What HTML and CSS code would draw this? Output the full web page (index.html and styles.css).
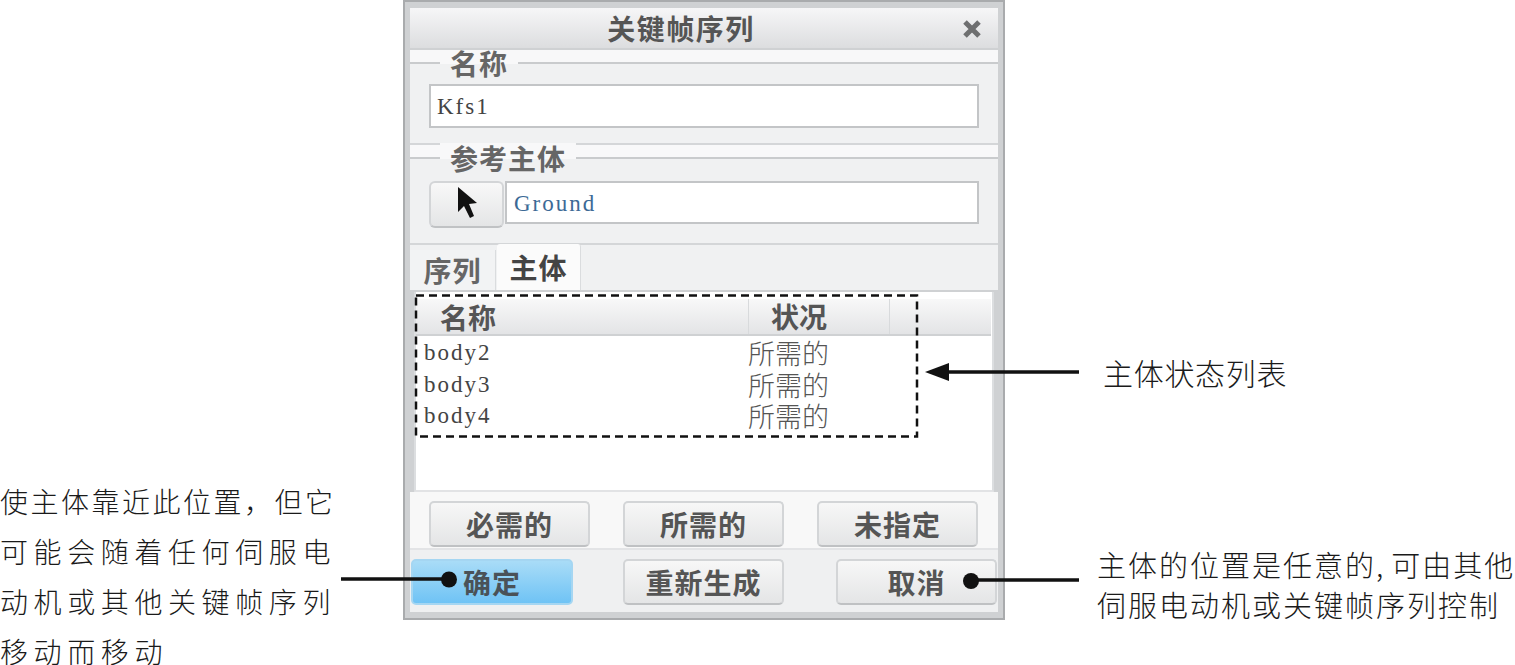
FILE: index.html
```html
<!DOCTYPE html>
<html lang="zh-CN">
<head>
    <meta charset="UTF-8">
    <title>关键帧序列</title>
    <link rel="stylesheet" href="styles.css">
</head>
<body>
    <div class="stage">
        <div class="note note-left">
            <div class="tight">使主体靠近此位置&#xFF0C;但它</div>
            <div>可能会随着任何伺服电</div>
            <div>动机或其他关键帧序列</div>
            <div>移动而移动</div>
        </div>

        <div class="dialog">
            <div class="title-bar">
                <span class="title">关键帧序列</span>
                <svg class="close" width="20" height="20" viewBox="0 0 20 20"><path d="M3 3 L17 17 M17 3 L3 17" stroke="#6e6f70" stroke-width="5"/></svg>
            </div>

            <div class="group group-name">
                <div class="legend"><span>名称</span></div>
                <div class="group-body">
                    <div class="field mono">Kfs1</div>
                </div>
            </div>

            <div class="group group-ref">
                <div class="legend"><span>参考主体</span></div>
                <div class="group-body">
                    <button class="pick">
                        <svg width="20" height="32" viewBox="0 0 20 32"><path d="M1 0 L1 25 L7 19 L13 31 L17 29 L12 17 L20 16 Z" fill="#111"/></svg>
                    </button>
                    <div class="field mono ground">Ground</div>
                </div>
            </div>

            <div class="tabs">
                <div class="tab">序列</div>
                <div class="tab tab-active">主体</div>
            </div>

            <div class="list">
                <div class="list-head">
                    <div class="col-name">名称</div>
                    <div class="col-state">状况</div>
                    <div class="col-rest"></div>
                </div>
                <div class="list-row"><span class="col-name mono">body2</span><span class="col-state">所需的</span></div>
                <div class="list-row"><span class="col-name mono">body3</span><span class="col-state">所需的</span></div>
                <div class="list-row"><span class="col-name mono">body4</span><span class="col-state">所需的</span></div>
            </div>

            <div class="state-buttons">
                <button class="btn">必需的</button>
                <button class="btn">所需的</button>
                <button class="btn">未指定</button>
            </div>

            <div class="footer">
                <button class="btn btn-ok">确定</button>
                <button class="btn">重新生成</button>
                <button class="btn btn-cancel">取消</button>
            </div>
        </div>

        <div class="notes-right">
            <div class="note note-list">主体状态列表</div>
            <div class="note note-free">主体的位置是任意的<span class="comma">,</span>可由其他<br>伺服电动机或关键帧序列控制</div>
        </div>

        <!-- callout lines and the dashed box sit over the dialog -->
        <svg class="callouts" width="1515" height="665" viewBox="0 0 1515 665">
            <rect x="416" y="295.500" width="501" height="141" fill="none" stroke="#111" stroke-width="2.500" stroke-dasharray="8 5"/>
            <path d="M1079 372 H945" stroke="#111" stroke-width="3.500"/>
            <path d="M925 372 L949 363 V381 Z" fill="#111"/>
            <path d="M341 579 H449" stroke="#111" stroke-width="3.500"/>
            <circle cx="449" cy="579.500" r="8" fill="#111"/>
            <path d="M971 580 H1079" stroke="#111" stroke-width="3.500"/>
            <circle cx="971" cy="581" r="8" fill="#111"/>
        </svg>
    </div>
</body>
</html>
```

FILE: styles.css
```css
* {
    box-sizing: border-box;
}

body {
    margin: 0;
    background: #fff;
    overflow: hidden;
    font-family: "Noto Sans CJK SC", "Liberation Sans", sans-serif;
}

.stage {
    position: relative;
    display: grid;
    grid-template-columns: 403px 602px 1fr;
    width: 1515px;
    height: 665px;
    overflow: hidden;
}

.callouts {
    position: absolute;
    top: 0;
    left: 0;
    pointer-events: none;
}

.note {
    font-weight: 300;
    color: #1a1a1a;
    white-space: nowrap;
}

.note-left {
    display: flex;
    flex-direction: column;
    gap: 22px;
    margin-top: 487px;
    font-size: 28px;
    line-height: 28px;
    letter-spacing: 5.600px;
}

.note-left .tight {
    letter-spacing: 2.500px;
}

.notes-right {
    display: flex;
    flex-direction: column;
}

.note-list {
    margin: 352px 0 0 98px;
    font-size: 30px;
    line-height: 40px;
    letter-spacing: 0.700px;
}

.note-free {
    margin: 152px 0 0 92px;
    font-size: 29px;
    line-height: 40px;
    letter-spacing: 2px;
}

.comma {
    letter-spacing: 8px;
}

/* dialog */
.dialog {
    display: flex;
    flex-direction: column;
    height: 620px;
    padding: 6px 5px 6px 5px;
    background: #cfd1d3;
    border: 2px solid #a9abad;
    color: #555;
    font-size: 28px;
    font-weight: 700;
}

.mono {
    font-family: "Liberation Serif", serif;
    font-weight: 400;
    font-size: 23px;
    letter-spacing: 2px;
    color: #444;
}

.title-bar {
    display: flex;
    align-items: center;
    justify-content: center;
    position: relative;
    height: 42px;
    padding-right: 46px;
    flex: none;
    background: linear-gradient(#f6f6f7, #dcdddf);
    border-bottom: 2px solid #cfd1d3;
}

.title {
    font-size: 28px;
    letter-spacing: 1.500px;
}

.close {
    position: absolute;
    right: 16px;
    top: 11px;
}

/* groups */
.group {
    flex: none;
    background: #f0f1f2;
    border-bottom: 2px solid #d4d6d8;
}

.group-name {
    height: 95px;
}

.group-ref {
    height: 100px;
}

.legend {
    display: flex;
    align-items: center;
    height: 30px;
    padding-left: 30px;
    background: linear-gradient(#f8f8f9 12px, #c9cbcd 12px, #c9cbcd 14px, #f0f1f2 14px);
    font-size: 28px;
    letter-spacing: 1px;
    color: #666;
}

.legend span {
    height: 30px;
    margin-top: -4px;
    padding: 0 10px;
    line-height: 30px;
    background: linear-gradient(#f8f8f9 16px, #f0f1f2 16px);
}

.group-body {
    display: flex;
    padding: 4px 19px 0;
}

.group-ref .group-body {
    padding-top: 6px;
}

.field {
    flex: 1;
    height: 44px;
    padding-left: 6px;
    background: #fff;
    border: 2px solid #c3c5c7;
    line-height: 42px;
}

.ground {
    margin-left: 1px;
    height: 43px;
    color: #3c6a96;
    padding-left: 7px;
}

.pick {
    width: 75px;
    height: 47px;
    padding: 0;
    background: linear-gradient(#f8f8f8, #e4e5e6);
    border: 2px solid #d3d5d7;
    border-bottom-color: #c0c2c4;
    border-radius: 6px;
}

/* tabs */
.tabs {
    display: flex;
    align-items: flex-end;
    flex: none;
    height: 47px;
    background: #f0f1f2;
    border-bottom: 2px solid #cfd1d3;
}

.tab {
    display: flex;
    align-items: center;
    justify-content: center;
    width: 86px;
    height: 40px;
    background: #f2f3f4;
    border-right: 1px solid #dadcde;
    font-size: 28px;
    letter-spacing: 1px;
    color: #666;
}

.tab-active {
    width: 84px;
    height: 46px;
    margin-left: 1px;
    padding-bottom: 1px;
    background: #fbfbfb;
    color: #444;
    border-radius: 3px 3px 0 0;
}

/* list */
.list {
    flex: none;
    height: 200px;
    margin: 0 4px;
    padding-top: 7px;
    background: #fff;
    border-left: 2px solid #dcdee0;
    border-right: 2px solid #dcdee0;
    border-bottom: 2px solid #e2e3e5;
    font-size: 28px;
}

.list-head {
    display: flex;
    align-items: center;
    height: 37px;
    margin-right: 1px;
    background: linear-gradient(#f8f8f8, #e3e4e6);
    border-bottom: 2px solid #cfd1d3;
}

.list-head .col-name {
    padding-left: 24px;
}

.list-head .col-state {
    width: 142px;
    height: 100%;
    padding-left: 22px;
    border-left: 1px solid #d8dadc;
    border-right: 1px solid #d8dadc;
    line-height: 35px;
}

.col-name {
    width: 332px;
}

.list-row {
    display: flex;
    align-items: center;
    height: 31.500px;
    line-height: 1;
    font-weight: 400;
}

.list-row:nth-child(2) {
    margin-top: 1px;
}

.list-row .col-name {
    padding-left: 8px;
}

.list-row .col-state {
    font-size: 27px;
    color: #555;
    font-weight: 300;
}

/* bottom buttons */
.state-buttons {
    display: flex;
    gap: 33px;
    flex: none;
    height: 56px;
    padding: 9px 19px 0;
    background: #f8f8f8;
}

.footer {
    display: flex;
    gap: 50px;
    flex: none;
    height: 64px;
    padding: 9px 1px 0 1px;
    background: #eff0f1;
    border-top: 2px solid #e3e4e6;
}

.btn {
    width: 161px;
    height: 46px;
    padding: 0;
    background: linear-gradient(#f7f7f7, #e4e5e6);
    border: 2px solid #d3d5d7;
    border-bottom-color: #bfc1c3;
    border-radius: 5px;
    font-family: inherit;
    font-size: 28px;
    font-weight: 700;
    letter-spacing: 1px;
    line-height: 40px;
    color: #555;
}

.btn-ok {
    width: 162px;
    background: linear-gradient(#a9dcf7, #6fc3f5);
    border-color: #a5d6f2;
    color: #4a5258;
}

.btn-cancel {
    margin-left: auto;
}
```
